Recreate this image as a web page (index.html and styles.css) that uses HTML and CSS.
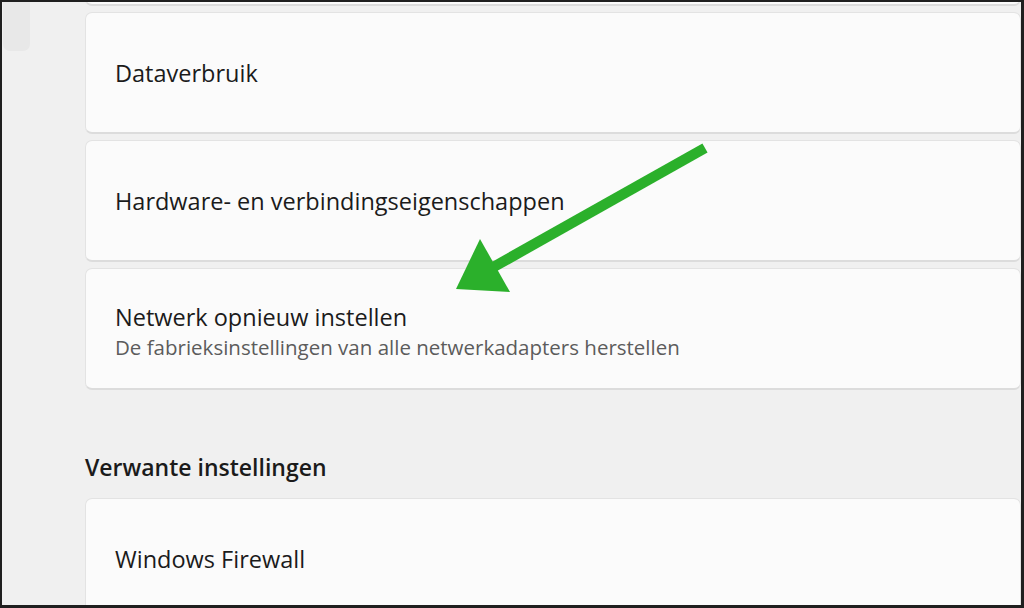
FILE: index.html
```html
<!DOCTYPE html>
<html>
    <head>
        <title>Netwerk en internet</title>
        <link rel="stylesheet" href="styles.css">
    </head>
    <body>
        <div class="frame">
            <div class="nav">
                <div class="nav-item selected"></div>
            </div>

            <div class="content">
                <div class="card cut"></div>

                <div class="card">
                    <div class="card-title">Dataverbruik</div>
                </div>

                <div class="card">
                    <div class="card-title">Hardware- en verbindingseigenschappen</div>
                </div>

                <div class="card two-line">
                    <div class="card-title">Netwerk opnieuw instellen</div>
                    <div class="card-sub">De fabrieksinstellingen van alle netwerkadapters herstellen</div>
                </div>

                <h2 class="section">Verwante instellingen</h2>

                <div class="card">
                    <div class="card-title">Windows Firewall</div>
                </div>
            </div>

            <!-- green pointer drawn over the page -->
            <svg class="arrow" width="1024" height="608" viewBox="0 0 1024 608">
                <line x1="705" y1="148" x2="490" y2="269" stroke="#2bb02b" stroke-width="10.5" />
                <polygon points="480,239 456,289 510,292" fill="#2bb02b" />
            </svg>
        </div>
    </body>
</html>
```

FILE: styles.css
```css
body { margin: 0; font-family: "Open Sans", "Noto Sans", sans-serif; background: #1f1f1f; }
.frame { position: relative; width: 1024px; height: 608px; box-sizing: border-box; border: 2px solid #1f1f1f; border-right-width: 3px; border-bottom-width: 3px; background: #f0f0f0; display: flex; overflow: hidden; }
.nav { width: 83px; flex-shrink: 0; }
.nav-item { width: 27px; height: 49px; margin-left: 1px; }
.nav-item.selected { background: #e8e8e8; border-radius: 0 0 7px 7px; }
.content { flex: 1; display: flex; flex-direction: column; }
.card { height: 122px; flex-shrink: 0; box-sizing: border-box; background: #fbfbfb; border: 1px solid #e3e3e3; border-bottom: 2px solid #dcdcdc; border-radius: 7px; margin-bottom: 6px; padding-left: 29px; display: flex; flex-direction: column; justify-content: center; }
.card.cut { margin-top: -118px; }
.card.two-line { padding-top: 5px; }
.card-title { font-size: 23.5px; line-height: 32px; color: #1b1b1b; }
.card-sub { font-size: 20.5px; line-height: 28px; color: #5c5c5c; }
.section { font-size: 23px; font-weight: 600; color: #1b1b1b; line-height: 30px; margin: 56px 0 16px 0; }
.arrow { position: absolute; left: -2px; top: -2px; pointer-events: none; }
```
